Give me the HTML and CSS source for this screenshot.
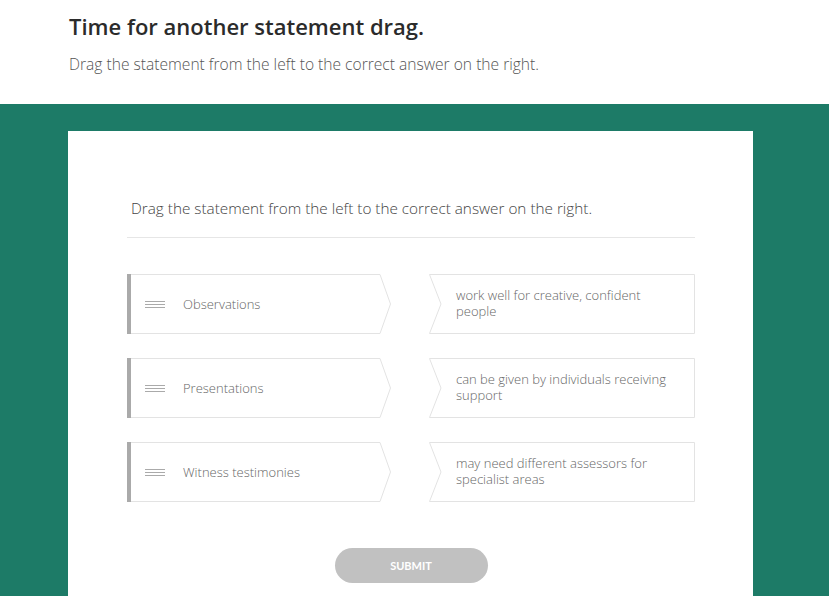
FILE: index.html
```html
<!DOCTYPE html>
<html lang="en">
<head>
  <meta charset="UTF-8">
  <meta name="viewport" content="width=device-width, initial-scale=1.0">
  <title>Statement drag</title>
  <link rel="stylesheet" href="styles.css">
</head>
<body>
  <header class="intro">
    <h1>Time for another statement drag.</h1>
    <p>Drag the statement from the left to the correct answer on the right.</p>
  </header>

  <main class="band">
    <div class="card">
      <p class="question">Drag the statement from the left to the correct answer on the right.</p>

      <div class="pairs">
        <!-- Row 1 -->
        <div class="statement">
          <svg class="shape" viewBox="0 0 264 60" preserveAspectRatio="none">
            <polygon points="0.5,0.5 253,0.5 263.5,30 253,59.5 0.5,59.5" fill="#fff" stroke="#e3e3e3"/>
            <rect x="0" y="0" width="4" height="60" fill="#aaa"/>
          </svg>
          <span class="grip"></span>
          <span class="label">Observations</span>
        </div>
        <div class="answer">
          <svg class="shape" viewBox="0 0 266 60" preserveAspectRatio="none">
            <polygon points="0.5,0.5 265.5,0.5 265.5,59.5 0.5,59.5 12,30" fill="#fff" stroke="#e3e3e3"/>
          </svg>
          <span class="label">work well for creative, confident people</span>
        </div>

        <!-- Row 2 -->
        <div class="statement">
          <svg class="shape" viewBox="0 0 264 60" preserveAspectRatio="none">
            <polygon points="0.5,0.5 253,0.5 263.5,30 253,59.5 0.5,59.5" fill="#fff" stroke="#e3e3e3"/>
            <rect x="0" y="0" width="4" height="60" fill="#aaa"/>
          </svg>
          <span class="grip"></span>
          <span class="label">Presentations</span>
        </div>
        <div class="answer">
          <svg class="shape" viewBox="0 0 266 60" preserveAspectRatio="none">
            <polygon points="0.5,0.5 265.5,0.5 265.5,59.5 0.5,59.5 12,30" fill="#fff" stroke="#e3e3e3"/>
          </svg>
          <span class="label">can be given by individuals receiving support</span>
        </div>

        <!-- Row 3 -->
        <div class="statement">
          <svg class="shape" viewBox="0 0 264 60" preserveAspectRatio="none">
            <polygon points="0.5,0.5 253,0.5 263.5,30 253,59.5 0.5,59.5" fill="#fff" stroke="#e3e3e3"/>
            <rect x="0" y="0" width="4" height="60" fill="#aaa"/>
          </svg>
          <span class="grip"></span>
          <span class="label">Witness testimonies</span>
        </div>
        <div class="answer">
          <svg class="shape" viewBox="0 0 266 60" preserveAspectRatio="none">
            <polygon points="0.5,0.5 265.5,0.5 265.5,59.5 0.5,59.5 12,30" fill="#fff" stroke="#e3e3e3"/>
          </svg>
          <span class="label">may need different assessors for specialist areas</span>
        </div>
      </div>

      <div class="actions">
        <button class="submit-button" disabled>SUBMIT</button>
      </div>
    </div>
  </main>
</body>
</html>
```

FILE: styles.css
```css
body {
  margin: 0;
  font-family: 'Open Sans', sans-serif;
  color: #444;
  background: #fff;
  overflow: hidden;
}

.intro {
  padding: 12px 69px 0;
  height: 104px;
  box-sizing: border-box;
}

.intro h1 {
  margin: 0;
  font-family: 'Open Sans', sans-serif;
  font-size: 22px;
  font-weight: 600;
  color: #2b2b2b;
  line-height: 28px;
}

.intro p {
  margin: 13px 0 0;
  font-size: 15.6px;
  font-weight: 300;
  color: #555;
}

.band {
  background: #1d7b67;
  padding: 27px 0 0 68px;
  height: 500px;
  box-sizing: border-box;
}

.card {
  background: #fff;
  width: 685px;
  height: 470px;
  padding: 67px 58px 0 59px;
  box-sizing: border-box;
}

.question {
  margin: 0;
  padding: 0 0 19px 4px;
  font-size: 15.3px;
  font-weight: 300;
  color: #444;
  border-bottom: 1px solid #e6e6e6;
}

.pairs {
  display: grid;
  grid-template-columns: 264px 266px;
  column-gap: 38px;
  row-gap: 24px;
  margin-top: 36px;
}

.statement,
.answer {
  position: relative;
  height: 60px;
  display: flex;
  align-items: center;
}

.shape {
  position: absolute;
  inset: 0;
  width: 100%;
  height: 100%;
}

.grip {
  position: relative;
  width: 20px;
  height: 7px;
  margin-left: 18px;
  border-top: 1px solid #aaa;
  border-bottom: 1px solid #aaa;
  box-sizing: border-box;
}

.grip::after {
  content: "";
  position: absolute;
  left: 0;
  right: 0;
  top: 2px;
  border-top: 1px solid #aaa;
}

.statement .label {
  position: relative;
  margin-left: 18px;
  font-size: 13px;
  font-weight: 300;
  color: #666;
}

.answer .label {
  position: relative;
  padding: 0 12px 2px 27px;
  font-size: 13px;
  font-weight: 300;
  line-height: 16px;
  color: #666;
}

.actions {
  display: flex;
  justify-content: center;
  margin-top: 46px;
}

.submit-button {
  width: 153px;
  height: 35px;
  border: none;
  border-radius: 18px;
  background: #c1c1c1;
  color: #fff;
  font-family: 'Lato', sans-serif;
  font-weight: 700;
  font-size: 11px;
}
```
